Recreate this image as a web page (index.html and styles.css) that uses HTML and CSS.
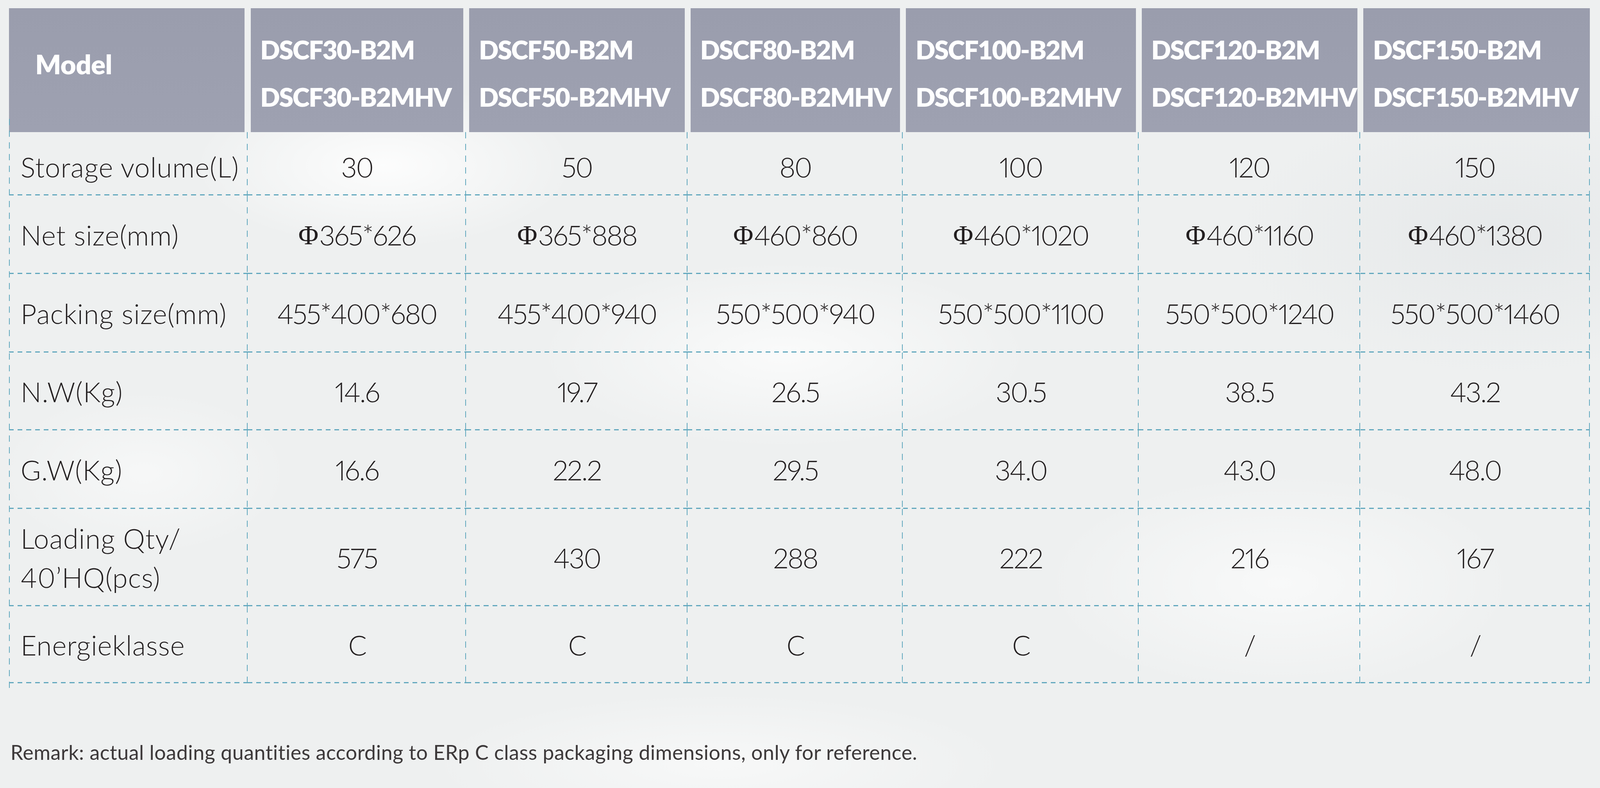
FILE: index.html
```html
<!DOCTYPE html>
<html lang="en">
<head>
<meta charset="utf-8">
<title>DSCF specification table</title>
<link rel="stylesheet" href="styles.css">
</head>
<body>
<main class="page">
  <div class="spec">
    <div class="th th-model">Model</div>
    <div class="th">DSCF30-B2M<br>DSCF30-B2MHV</div>
    <div class="th">DSCF50-B2M<br>DSCF50-B2MHV</div>
    <div class="th">DSCF80-B2M<br>DSCF80-B2MHV</div>
    <div class="th">DSCF100-B2M<br>DSCF100-B2MHV</div>
    <div class="th">DSCF120-B2M<br>DSCF120-B2MHV</div>
    <div class="th th-last">DSCF150-B2M<br>DSCF150-B2MHV</div>

    <div class="td label r1">Storage volume(L)</div>
    <div class="td r1">30</div>
    <div class="td r1">50</div>
    <div class="td r1">80</div>
    <div class="td r1">100</div>
    <div class="td r1">120</div>
    <div class="td r1">150</div>

    <div class="td label">Net size(mm)</div>
    <div class="td"><span class="phi">Φ</span>365*626</div>
    <div class="td"><span class="phi">Φ</span>365*888</div>
    <div class="td"><span class="phi">Φ</span>460*860</div>
    <div class="td"><span class="phi">Φ</span>460*1020</div>
    <div class="td"><span class="phi">Φ</span>460*1160</div>
    <div class="td"><span class="phi">Φ</span>460*1380</div>

    <div class="td label">Packing size(mm)</div>
    <div class="td">455*400*680</div>
    <div class="td">455*400*940</div>
    <div class="td">550*500*940</div>
    <div class="td">550*500*1100</div>
    <div class="td">550*500*1240</div>
    <div class="td">550*500*1460</div>

    <div class="td label">N.W(Kg)</div>
    <div class="td">14.6</div>
    <div class="td">19.7</div>
    <div class="td">26.5</div>
    <div class="td">30.5</div>
    <div class="td">38.5</div>
    <div class="td">43.2</div>

    <div class="td label">G.W(Kg)</div>
    <div class="td">16.6</div>
    <div class="td">22.2</div>
    <div class="td">29.5</div>
    <div class="td">34.0</div>
    <div class="td">43.0</div>
    <div class="td">48.0</div>

    <div class="td label two">Loading Qty/<br>40’HQ(pcs)</div>
    <div class="td">575</div>
    <div class="td">430</div>
    <div class="td">288</div>
    <div class="td">222</div>
    <div class="td">216</div>
    <div class="td">167</div>

    <div class="td label">Energieklasse</div>
    <div class="td">C</div>
    <div class="td">C</div>
    <div class="td">C</div>
    <div class="td">C</div>
    <div class="td">/</div>
    <div class="td">/</div>
  </div>
  <p class="remark">Remark: actual loading quantities according to ERp C class packaging dimensions, only for reference.</p>
</main>
</body>
</html>
```

FILE: styles.css
```css
/* The reference is 5349 x 2016.
   --x : one reference pixel horizontally
   --y : one reference pixel vertically
   --f : one reference pixel for type (mean of both) */
html {
  --x: calc(100vw / 5349);
  --y: calc(100vh / 2016);
  --f: calc(100vw / 10698 + 100vh / 4032);
  --dash: #62a8be;
  margin: 0;
  padding: 0;
  overflow: hidden;
}

body {
  margin: 0;
  padding: 0;
  width: 100vw;
  height: 100vh;
  overflow: hidden;
  background-color: #eef0f0;
  background-image:
    radial-gradient(ellipse 17% 15% at 24% 21%, rgba(255,255,255,0.85), rgba(255,255,255,0) 70%),
    radial-gradient(ellipse 22% 17% at 49% 45%, rgba(255,255,255,0.7), rgba(255,255,255,0) 70%),
    radial-gradient(ellipse 21% 20% at 80% 74%, rgba(255,255,255,0.6), rgba(255,255,255,0) 70%),
    radial-gradient(ellipse 26% 13% at 45% 97%, rgba(255,255,255,0.55), rgba(255,255,255,0) 70%),
    radial-gradient(ellipse 13% 15% at 9% 60%, rgba(255,255,255,0.5), rgba(255,255,255,0) 70%),
    radial-gradient(ellipse 24% 25% at 94% 30%, rgba(225,228,230,0.6), rgba(225,228,230,0) 70%);
  font-family: Lato, "Open Sans", "Liberation Sans", Arial, sans-serif;
  color: #231f20;
}

.page {
  padding: calc(21 * var(--y)) 0 0 calc(30 * var(--x));
}

.spec {
  position: relative;
  display: grid;
  grid-template-columns:
    calc(798 * var(--x)) calc(731 * var(--x)) calc(740 * var(--x)) calc(720 * var(--x))
    calc(788 * var(--x)) calc(741 * var(--x)) calc(767 * var(--x));
  grid-template-rows:
    calc(317 * var(--y)) calc(162 * var(--y)) calc(201 * var(--y)) calc(201 * var(--y))
    calc(199 * var(--y)) calc(201 * var(--y)) calc(249 * var(--y)) calc(197 * var(--y));
}

.th {
  margin: 0 calc(10 * var(--x));
  background: linear-gradient(to bottom, #9a9dad, #9ea1b1);
  color: #ffffff;
  font-weight: 800;
  font-size: calc(75 * var(--f));
  line-height: calc(121 * var(--y));
  letter-spacing: calc(-2.8 * var(--x));
  padding: calc(14 * var(--y)) 0 0 calc(32 * var(--x));
  display: flex;
  flex-direction: column;
  justify-content: center;
  white-space: nowrap;
}

.th-model {
  margin-left: 0;
  padding: 0 0 calc(32 * var(--y)) calc(88 * var(--x));
  font-size: calc(78 * var(--f));
  letter-spacing: calc(-0.8 * var(--x));
}

.th-last {
  margin-right: 0;
}

.td {
  display: flex;
  align-items: center;
  justify-content: center;
  font-weight: 300;
  font-size: calc(80 * var(--f));
  line-height: calc(100 * var(--y));
  letter-spacing: calc(-3.5 * var(--x));
  font-variant-numeric: proportional-nums;
  white-space: nowrap;
  background-image:
    repeating-linear-gradient(to right, var(--dash) 0 calc(16 * var(--x)), transparent calc(16 * var(--x)) calc(29 * var(--x))),
    repeating-linear-gradient(to bottom, var(--dash) 0 calc(16 * var(--y)), transparent calc(16 * var(--y)) calc(30 * var(--y)));
  background-size: 100% calc(3 * var(--y)), calc(3 * var(--x)) 100%;
  background-position: left bottom, right top;
  background-repeat: no-repeat;
}

.td.r1 {
  padding-top: calc(16 * var(--y));
}

.label {
  justify-content: flex-start;
  padding-left: calc(39 * var(--x));
  letter-spacing: calc(1.3 * var(--x));
}

/* outer left rule: starts a little inside the header and runs just past the last row */
.spec::before {
  content: "";
  position: absolute;
  left: 0;
  top: calc(283 * var(--y));
  width: calc(3 * var(--x));
  height: calc(1458 * var(--y));
  background: repeating-linear-gradient(to bottom, var(--dash) 0 calc(16 * var(--y)), transparent calc(16 * var(--y)) calc(30 * var(--y)));
  z-index: 1;
}

.phi {
  font-family: "Liberation Serif", "DejaVu Serif", serif;
  font-weight: 400;
  margin-right: calc(6 * var(--x));
}

.remark {
  margin: calc(146 * var(--y)) 0 0 calc(5 * var(--x));
  font-size: calc(59 * var(--f));
  line-height: calc(60 * var(--y));
  letter-spacing: calc(0.6 * var(--x));
  font-weight: 400;
  color: #3d393a;
  white-space: nowrap;
}
```
